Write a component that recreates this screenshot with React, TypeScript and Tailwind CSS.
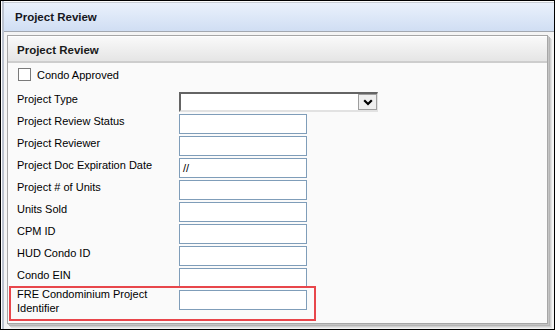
import React from 'react';

const fields: { label: string; value?: string }[] = [
  { label: 'Project Review Status' },
  { label: 'Project Reviewer' },
  { label: 'Project Doc Expiration Date', value: '//' },
  { label: 'Project # of Units' },
  { label: 'Units Sold' },
  { label: 'CPM ID' },
  { label: 'HUD Condo ID' },
  { label: 'Condo EIN' },
];

function TextBox({ value }: { value?: string }) {
  return (
    <div className="w-[128px] h-[20px] border border-[#7f9db9] bg-white pl-[3px] flex items-center text-[11px] leading-[14px] text-black">
      {value}
    </div>
  );
}

export default function App() {
  return (
    <div
      className="w-[555px] h-[330px] border border-black bg-[#f4f4f4] text-black overflow-hidden"
      style={{ fontFamily: '"Liberation Sans", Arial, sans-serif' }}
    >
      <div className="h-full border-l border-white">
        <div className="h-full border-l-2 border-[#bcc3cf] flex flex-col">
          {/* top lines */}
          <div className="h-[1px] bg-[#fdfdfd]" />
          <div className="h-[1px] bg-[#c9ced6]" />

          {/* Page header */}
          <div className="h-[29px] border-b border-[#a3a8b0] bg-gradient-to-b from-[#eaf1fc] to-[#d0def3] flex items-center pl-[11px] pt-[2px]">
            <span className="text-[11.5px] font-bold text-[#151520]">Project Review</span>
          </div>

          {/* Panel */}
          <div className="pt-[3px] pl-[3px]">
            <div className="w-[541px] h-[289px] border border-[#a6a6a6] bg-[#fafafa] shadow-[1px_1px_0_#c4c4c4,2px_2px_0_#b4b4b4,3px_3px_0_#cfcfcf,4px_4px_0_#e2e2e2] flex flex-col">
              <div className="h-[27px] border-t border-white border-b-2 border-b-[#cdcdcd] bg-gradient-to-b from-[#f9f9f9] to-[#e5e5e5] flex items-center pl-[9px] pt-[4px]">
                <span className="text-[11.5px] font-bold text-[#1a1a1a]">Project Review</span>
              </div>

              <div className="pl-[9px] pt-[5px] text-[11px] leading-[14px]">
                <div className="flex items-center h-[13px]">
                  <div className="ml-[1px] w-[13px] h-[13px] border border-[#7a7a7a] bg-white" />
                  <span className="ml-[6px] pt-[1px]">Condo Approved</span>
                </div>

                <div className="mt-[11px] flex flex-col">
                  <div className="flex items-start h-[22px]">
                    <div className="w-[162px]">Project Type</div>
                    <div className="w-[199px] h-[20px] border-t-2 border-l-2 border-[#646464] border-b-2 border-b-[#e2e2e2] border-r border-r-[#e2e2e2] bg-white flex justify-end">
                      <div className="w-[19px] h-full bg-[#efefef] border border-[#9e9e9e] flex items-center justify-center">
                        <svg width="10" height="7" viewBox="0 0 10 7">
                          <path d="M1.2 1.2 L5 5 L8.8 1.2" stroke="#000" strokeWidth="2.2" fill="none" />
                        </svg>
                      </div>
                    </div>
                  </div>

                  {fields.map((f) => (
                    <div key={f.label} className="flex items-start h-[22px]">
                      <div className="w-[162px]">{f.label}</div>
                      <TextBox value={f.value} />
                    </div>
                  ))}

                  <div className="relative flex items-start mt-[-3px]">
                    <div className="w-[162px]">
                      FRE Condominium Project
                      <br />
                      Identifier
                    </div>
                    <div className="mt-[3px]">
                      <TextBox />
                    </div>
                    <div className="absolute left-[-8px] top-[-1px] w-[307px] h-[35px] border-2 border-[#e8464b]" />
                  </div>
                </div>
              </div>
            </div>
          </div>
        </div>
      </div>
    </div>
  );
}
